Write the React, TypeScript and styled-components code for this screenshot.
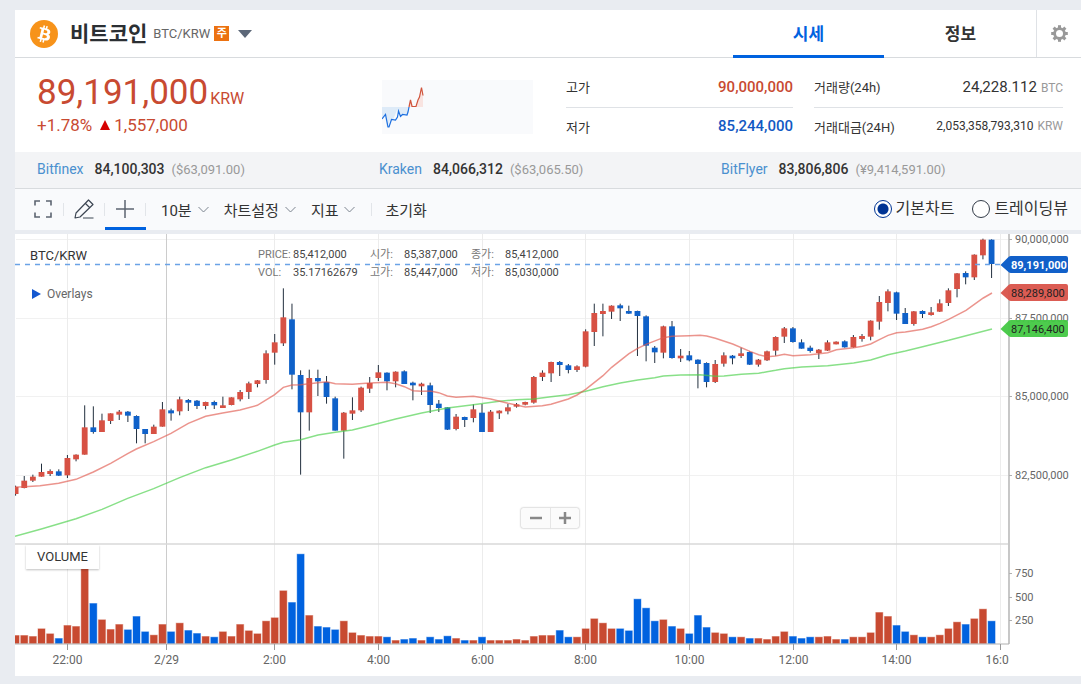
import React from "react";
import styled, { createGlobalStyle } from "styled-components";

const RED = "#c84a31";
const BLUE = "#0062df";
const SANS = `Roboto, "Noto Sans CJK KR", sans-serif`;

const GlobalStyle = createGlobalStyle`
  *, *::before, *::after { box-sizing: border-box; }
  body { margin: 0; background: #e9ecf1; font-family: ${SANS}; color: #333; }
  button { font: inherit; color: inherit; background: none; border: 0; padding: 0; cursor: pointer; }
  h1, p, dl, dd, dt { margin: 0; }
`;

const Page = styled.main`
  padding: 10px 0 8px 15px;
`;

/* ---------- header ---------- */
const Header = styled.header`
  display: flex;
  height: 48px;
  background: #fff;
  border-bottom: 1px solid #d8dbde;
`;
const CoinPicker = styled.div`
  flex: 1;
  display: flex;
  align-items: center;
  padding-left: 15px;
`;
const CoinName = styled.h1`
  font-size: 21px;
  line-height: 24px;
  font-weight: 700;
  color: #2b2f33;
  margin-left: 12px;
`;
const Pair = styled.span`
  font-size: 13px;
  color: #666;
  margin-left: 6px;
`;
const Badge = styled.span`
  width: 15px;
  height: 15px;
  margin-left: 4px;
  background: #ec7211;
  color: #fff;
  font-size: 11px;
  line-height: 15px;
  font-weight: 700;
  text-align: center;
`;
const PickerButton = styled.button`
  display: flex;
  margin-left: 9px;
`;
const Tabs = styled.nav`
  display: flex;
  gap: 1px;
`;
const Tab = styled.a<{ $active?: boolean }>`
  width: 151px;
  height: 48px;
  text-align: center;
  text-decoration: none;
  font-size: 17px;
  line-height: 48px;
  font-weight: 700;
  color: ${(p) => (p.$active ? BLUE : "#333")};
  border-bottom: 3px solid ${(p) => (p.$active ? BLUE : "transparent")};
`;
const SettingsButton = styled.button`
  width: 45px;
  display: flex;
  align-items: center;
  justify-content: center;
  border-left: 1px solid #dfe2e6;
`;

/* ---------- price summary ---------- */
const Summary = styled.section`
  display: flex;
  align-items: flex-start;
  height: 94px;
  padding: 14px 18px 0 22px;
  background: #fff;
`;
const PriceBlock = styled.div`
  flex: 1;
  color: ${RED};
`;
const Price = styled.p`
  font-size: 35px;
  line-height: 42px;
  font-weight: 400;
`;
const Unit = styled.span`
  font-size: 16px;
  line-height: 16px;
  margin-left: 2px;
`;
const Change = styled.p`
  display: flex;
  align-items: center;
  gap: 4px;
  font-size: 17px;
  line-height: 22px;
  font-weight: 400;
`;
const UpMark = styled.i`
  margin-left: 4px;
  border: 5px solid transparent;
  border-top: 0;
  border-bottom: 10px solid #d60000;
`;
const SparkBox = styled.svg`
  width: 151px;
  height: 54px;
  margin: 8px 33px 0 0;
  background: #f9fafc;
`;
const Stats = styled.dl<{ $width: number }>`
  width: ${(p) => p.$width}px;
  margin-top: -4px;
  & + & { margin-left: 21px; }
`;
const Stat = styled.div`
  display: flex;
  justify-content: space-between;
  align-items: center;
  height: 38px;
  padding-bottom: 2px;
  &:first-child {
    height: 40px;
    border-bottom: 1px solid #dfe2e6;
  }
`;
const StatName = styled.dt`
  font-size: 13px;
`;
const StatValue = styled.dd<{ $color?: string; $small?: boolean }>`
  font-size: ${(p) => (p.$small ? 12 : 15)}px;
  font-weight: ${(p) => (p.$color ? 500 : 400)};
  color: ${(p) => p.$color ?? "#333"};
`;
const StatUnit = styled.span`
  font-size: 12px;
  color: #999;
  margin-left: 4px;
`;

/* ---------- other exchanges ---------- */
const Exchanges = styled.section`
  display: grid;
  grid-template-columns: repeat(3, 1fr);
  align-items: center;
  height: 37px;
  padding: 0 18px 2px 22px;
  background: #f3f4f6;
  border-bottom: 1px solid #d8dbde;
`;
const Exchange = styled.div`
  display: flex;
  align-items: baseline;
  font-size: 14px;
`;
const ExchangeLink = styled.a`
  color: #4a90cf;
  text-decoration: none;
`;
const ExchangePrice = styled.span`
  font-weight: 500;
  margin: 0 7px 0 11px;
`;
const ExchangeRaw = styled.span`
  font-size: 13px;
  color: #999;
`;

/* ---------- toolbar ---------- */
const Toolbar = styled.div`
  display: flex;
  align-items: center;
  height: 41px;
  padding-right: 12px;
  background: #f9fafc;
  font-size: 15px;
`;
const ToolButton = styled.button<{ $active?: boolean }>`
  display: flex;
  align-items: center;
  justify-content: center;
  width: 41px;
  height: 41px;
  border-bottom: 3px solid ${(p) => (p.$active ? BLUE : "transparent")};
  padding: 2px 2px 0 0;
  &:first-child { width: 49px; padding: 2px 0 0 7px; }
`;
const Divider = styled.span`
  width: 1px;
  height: 13px;
  margin-left: -1px;
  background: #e2e5e9;
`;
const MenuButton = styled.button`
  display: flex;
  align-items: center;
  gap: 6px;
  margin-left: 15px;
`;
const ResetButton = styled.button`
  margin-left: 13px;
`;
const MenuDivider = styled(Divider)`
  margin-left: 16px;
`;
const ChartTypes = styled.fieldset`
  display: flex;
  gap: 18px;
  margin: 0 0 0 auto;
  padding: 0 1px 1px 0;
  border: 0;
`;
const ChartType = styled.label`
  display: flex;
  align-items: center;
  gap: 4px;
  font-size: 16px;
  line-height: 20px;
`;
const Radio = styled.input`
  appearance: none;
  width: 18px;
  height: 18px;
  margin: 0;
  border: 1px solid #333b48;
  border-radius: 50%;
  background: #fff;
  &:checked {
    border-color: #003494;
    background: radial-gradient(circle, #003494 5px, #fff 6px);
  }
`;

/* ---------- chart ---------- */
const ChartPanel = styled.section`
  position: relative;
  margin-top: 4px;
  background: #fff;
`;
const ChartSvg = styled.svg`
  display: block;
  width: 100%;
  font-family: ${SANS};
`;
const ChartPair = styled.strong`
  position: absolute;
  left: 15px;
  top: 14px;
  font-size: 13px;
  line-height: 16px;
  font-weight: 400;
`;
const Overlays = styled.button`
  position: absolute;
  left: 17px;
  top: 52px;
  display: flex;
  align-items: center;
  gap: 6px;
  font-size: 12px;
  line-height: 16px;
  color: #666;
`;
const Readout = styled.dl`
  position: absolute;
  left: 243px;
  top: 12px;
  display: grid;
  grid-template-columns: 35px 77px 34px 67px 34px auto;
  font-size: 11px;
  line-height: 18px;
  color: #444;
  dt { color: #777; }
`;
const VolumeTag = styled.div`
  position: absolute;
  left: 11px;
  top: 311px;
  padding: 4px 11px 4px;
  font-size: 13px;
  line-height: 16px;
  background: #fff;
  box-shadow: 0 1px 2px rgba(0, 0, 0, 0.25);
`;
const ZoomGroup = styled.div`
  position: absolute;
  left: 47.5%;
  top: 274px;
  display: flex;
  background: #fbfbfb;
  border-radius: 2px;
  box-shadow: 0 0 2px rgba(0, 0, 0, 0.4);
`;
const ZoomButton = styled.button`
  display: flex;
  align-items: center;
  justify-content: center;
  width: 29px;
  height: 20px;
  & + & { border-left: 1px solid #e6e6e6; }
`;

/* Candles: wick top, body top, body bottom, wick bottom (thirds of a unit), rising or falling. */
type Candle = [number, number, number, number, "R" | "B"];
const CANDLES: Candle[] = [
  [767, 771, 792, 797, "R"], [738, 752, 774, 775, "R"], [734, 740, 752, 756, "R"], [701, 726, 740, 740, "R"],
  [718, 723, 732, 738, "R"], [718, 724, 737, 738, "B"], [675, 684, 736, 744, "R"], [673, 674, 688, 694, "R"],
  [526, 592, 674, 674, "R"], [529, 592, 606, 611, "B"], [551, 571, 606, 606, "R"], [550, 550, 573, 582, "R"],
  [540, 545, 554, 570, "R"], [543, 545, 557, 576, "B"], [556, 558, 597, 640, "B"], [597, 597, 612, 640, "B"],
  [584, 590, 612, 612, "R"], [516, 538, 590, 590, "R"], [536, 541, 550, 572, "B"], [500, 508, 544, 556, "R"],
  [507, 510, 518, 543, "B"], [510, 512, 528, 537, "B"], [515, 516, 528, 538, "R"], [512, 516, 526, 537, "B"],
  [500, 526, 534, 534, "R"], [502, 502, 525, 526, "R"], [480, 486, 508, 514, "R"], [455, 460, 486, 507, "R"],
  [450, 451, 462, 472, "R"], [361, 370, 450, 461, "R"], [312, 337, 368, 404, "R"], [175, 262, 340, 348, "R"],
  [221, 268, 434, 478, "B"], [421, 435, 547, 734, "B"], [419, 444, 547, 602, "R"], [419, 444, 454, 498, "B"],
  [438, 456, 501, 521, "B"], [500, 505, 602, 602, "B"], [546, 548, 602, 686, "R"], [502, 541, 551, 570, "R"],
  [470, 473, 541, 546, "R"], [441, 459, 476, 489, "R"], [405, 427, 444, 453, "R"], [427, 428, 454, 481, "B"],
  [424, 425, 454, 472, "R"], [421, 424, 462, 462, "B"], [455, 458, 466, 511, "B"], [458, 461, 469, 495, "R"],
  [458, 466, 525, 549, "B"], [510, 521, 534, 546, "B"], [532, 532, 599, 600, "B"], [552, 560, 597, 601, "R"],
  [560, 561, 570, 591, "B"], [523, 538, 564, 577, "R"], [522, 548, 606, 606, "B"], [540, 545, 606, 606, "R"],
  [541, 542, 550, 567, "R"], [522, 532, 544, 553, "R"], [519, 523, 530, 533, "R"], [515, 516, 524, 526, "R"],
  [438, 441, 518, 521, "R"], [421, 428, 441, 453, "R"], [395, 396, 430, 456, "R"], [393, 396, 405, 438, "B"],
  [402, 406, 420, 430, "B"], [406, 409, 420, 426, "R"], [298, 304, 410, 412, "R"], [221, 249, 306, 348, "R"],
  [221, 243, 252, 319, "R"], [226, 227, 245, 267, "R"], [221, 226, 235, 273, "B"], [227, 243, 251, 252, "B"],
  [242, 243, 258, 378, "B"], [256, 259, 347, 394, "B"], [348, 353, 367, 399, "B"], [287, 289, 368, 385, "R"],
  [273, 289, 384, 386, "B"], [357, 377, 385, 396, "R"], [363, 376, 391, 394, "B"], [388, 389, 402, 475, "B"],
  [397, 399, 456, 472, "B"], [390, 402, 456, 459, "R"], [367, 376, 401, 410, "R"], [375, 377, 385, 403, "B"],
  [353, 370, 378, 384, "R"], [364, 366, 404, 405, "B"], [387, 389, 404, 410, "R"], [362, 364, 391, 393, "R"],
  [319, 321, 362, 377, "R"], [291, 295, 320, 339, "R"], [291, 295, 336, 338, "B"], [328, 337, 356, 356, "B"],
  [347, 353, 363, 368, "B"], [357, 359, 369, 387, "R"], [331, 337, 362, 363, "R"], [334, 335, 343, 343, "R"],
  [331, 334, 352, 353, "B"], [315, 321, 352, 353, "R"], [312, 318, 327, 335, "R"], [271, 272, 320, 331, "R"],
  [198, 216, 275, 299, "R"], [178, 184, 219, 244, "R"], [185, 187, 251, 270, "B"], [234, 249, 282, 282, "B"],
  [243, 244, 282, 287, "R"], [241, 243, 252, 264, "B"], [231, 247, 255, 257, "R"], [208, 220, 245, 246, "R"],
  [175, 181, 219, 228, "R"], [129, 130, 177, 202, "R"], [124, 129, 142, 163, "B"], [73, 74, 142, 150, "R"],
  [26, 29, 76, 88, "R"], [28, 29, 102, 144, "B"],
];

/* Bar heights in thirds of a unit, one for each candle. */
const VOLUMES = [
  24, 24, 21, 44, 29, 15, 54, 51, 226, 120, 71, 42, 57, 41, 81, 35, 25, 57, 35, 61, 39, 30, 21, 19, 35, 21, 57, 38, 29,
  67, 77, 158, 123, 268, 84, 51, 48, 41, 67, 32, 24, 21, 21, 19, 9, 12, 15, 9, 19, 12, 22, 15, 9, 9, 19, 9, 9, 9, 12,
  9, 21, 24, 24, 39, 19, 19, 44, 74, 61, 44, 44, 38, 133, 106, 67, 71, 51, 44, 29, 84, 48, 32, 29, 19, 19, 15, 15, 12,
  21, 35, 21, 15, 19, 19, 21, 12, 12, 19, 19, 32, 93, 81, 54, 35, 25, 19, 19, 25, 44, 64, 57, 74, 103, 67,
];

const SHORT_AVERAGE = [
  [45, 771], [73, 770], [120, 767], [176, 760], [228, 748], [280, 726], [332, 700], [383, 671], [409, 657], [461, 635],
  [513, 610], [565, 580], [617, 559], [668, 549], [720, 540], [772, 526], [824, 494], [850, 472], [876, 465], [902, 464],
  [928, 461], [980, 455], [1006, 461], [1057, 463], [1109, 459], [1161, 457], [1187, 461], [1213, 470], [1239, 482],
  [1265, 484], [1291, 483], [1316, 488], [1342, 498], [1368, 502], [1394, 500], [1420, 499], [1472, 507], [1524, 520],
  [1576, 531], [1627, 527], [1653, 523], [1705, 507], [1731, 495], [1757, 478], [1809, 437], [1835, 412], [1887, 371],
  [1913, 355], [1938, 343], [1990, 323], [2016, 319], [2068, 317], [2100, 316], [2120, 318], [2146, 325], [2198, 342],
  [2250, 364], [2276, 374], [2301, 380], [2327, 378], [2353, 373], [2379, 377], [2431, 374], [2483, 368], [2509, 359],
  [2561, 353], [2587, 349], [2612, 342], [2638, 329], [2664, 316], [2690, 308], [2716, 306], [2768, 298], [2794, 290],
  [2820, 280], [2846, 268], [2898, 241], [2950, 204], [2976, 189],
];
const LONG_AVERAGE = [
  [45, 919], [124, 897], [228, 866], [306, 838], [383, 805], [461, 776], [539, 743], [617, 713], [694, 690], [772, 664],
  [824, 645], [850, 637], [902, 629], [954, 615], [1006, 607], [1057, 600], [1109, 587], [1187, 567], [1265, 549],
  [1342, 534], [1420, 524], [1498, 514], [1550, 509], [1601, 507], [1653, 500], [1705, 494], [1757, 484], [1809, 470],
  [1861, 459], [1913, 450], [1964, 443], [1990, 438], [2042, 435], [2100, 434], [2146, 439], [2172, 438], [2224, 433],
  [2276, 430], [2301, 425], [2327, 421], [2353, 416], [2405, 411], [2483, 407], [2561, 399], [2612, 390], [2664, 374],
  [2716, 363], [2768, 350], [2846, 331], [2898, 317], [2950, 304], [2976, 297],
];

const candleX = (i: number) => 0.6 + i * 8.637;
const priceY = (v: number) => (v - 12) / 3;
const linePoints = (pts: number[][]) => pts.map(([x, y]) => `${(x - 45) / 3},${priceY(y)}`).join(" ");

const TIMES: [number, string][] = [
  [52, "22:00"], [151, "2/29"], [259, "2:00"], [363, "4:00"], [467, "6:00"], [570, "8:00"], [674, "10:00"],
  [778, "12:00"], [881, "14:00"], [985, "16:00"],
];
const PRICES: [number, string][] = [[5, "90,000,000"], [84, "87,500,000"], [162, "85,000,000"], [241, "82,500,000"]];
const VOLUME_TICKS: [number, string][] = [[339, "750"], [363, "500"], [386, "250"]];
const FLAGS: [number, string, string, string][] = [
  [31, "89,191,000", "#1160c9", "#fff"],
  [59, "88,289,800", "#d9534a", "#222"],
  [95, "87,146,400", "#43c843", "#222"],
];

const Chart = () => (
  <ChartSvg viewBox="0 0 1066 442" role="img" aria-label="BTC/KRW">
    <defs>
      <clipPath id="plot"><rect x="0" y="0" width="994" height="442" /></clipPath>
    </defs>
    <g stroke="#f1f1f1" strokeWidth="1">
      {PRICES.map(([y]) => <line key={y} x1="1" x2="993" y1={y + 0.5} y2={y + 0.5} />)}
      {TIMES.map(([x, t]) => (
        <line key={x} x1={x + 0.5} x2={x + 0.5} y1="0" y2="409" stroke={t === "2/29" ? "#ccc" : "#ececec"} />
      ))}
    </g>
    <g clipPath="url(#plot)">
      {CANDLES.map(([wt, bt, bb, wb, c], i) => (
        <g key={i}>
          <line x1={candleX(i)} x2={candleX(i)} y1={priceY(wt)} y2={priceY(wb)} stroke="#222f3e" />
          <rect x={candleX(i) - 2.9} y={priceY(bt)} width="5.8" height={(bb - bt) / 3} fill={c === "R" ? "#d75144" : "#0f61c9"} />
        </g>
      ))}
      <polyline points={linePoints(LONG_AVERAGE)} fill="none" stroke="#48cf48" strokeOpacity=".65" strokeWidth="1.5" />
      <polyline points={linePoints(SHORT_AVERAGE)} fill="none" stroke="#e05a50" strokeOpacity=".65" strokeWidth="1.5" />
      {VOLUMES.map((v, i) => {
        const color = CANDLES[i][4] === "R" ? RED : BLUE;
        return (
          <rect key={i} x={candleX(i) - 3.5} y={409.500 - v / 3} width="7" height={v / 3} fill={color} stroke={color} strokeOpacity=".4" />
        );
      })}
    </g>
    <line x1="0" x2="985" y1="30.5" y2="30.5" stroke="#6ba3e6" strokeWidth="1.3" strokeDasharray="5 5" />
    <line x1="0" x2="993" y1="310" y2="310" stroke="#d9d9d9" strokeWidth="1.4" />
    <g stroke="#b0b0b0">
      <line x1="0" x2="994" y1="410" y2="410" />
      <line x1="994" x2="994" y1="0" y2="410" strokeWidth="1.4" />
      {TIMES.map(([x]) => <line key={x} x1={x + 0.5} x2={x + 0.5} y1="410" y2="416" stroke="#999" />)}
      {PRICES.concat(VOLUME_TICKS).map(([y]) => <line key={y} x1="994" x2="997" y1={y + 0.5} y2={y + 0.5} />)}
    </g>
    <svg x="0" y="410" width="994" height="32">
      {TIMES.map(([x, t]) => (
        <text key={x} x={x + 0.5} y="20" fontSize="12" fill="#666" textAnchor="middle">{t}</text>
      ))}
    </svg>
    <g fontSize="11" fill="#666">
      {PRICES.concat(VOLUME_TICKS).map(([y, t]) => <text key={y} x="1000" y={y + 4}>{t}</text>)}
    </g>
    {FLAGS.map(([y, t, bg, fg]) => (
      <g key={t}>
        <path
          d={`M985.5 ${y}l8-8q1-1 2.500-1h55q2 0 2 2v13q0 2-2 2h-55q-1.500 0-2.500-1z`}
          fill={bg} fillOpacity={fg === "#fff" ? 1 : 0.95}
        />
        <text x="996" y={y + 4} fontSize="11" fill={fg} fontWeight={fg === "#fff" ? 700 : 400}>{t}</text>
      </g>
    ))}
  </ChartSvg>
);

const Sparkline = () => (
  <SparkBox viewBox="0 0 151 54" aria-hidden="true">
    <path d="M0 27H27L25 35H21L17 35 15 30 11 40H8L5 48 3 35 0 39z" fill="#deebf8" />
    <path d="M27 27L28.500 20 31 26 34 26 37 17 39 8 41 15V27z" fill="#f9e4e1" />
    <path d="M0 39L3.500 34.500 6 47H7L9.500 39.500 13.500 40 15.500 37 16.500 31 18.500 36.500 20.500 34.500 25 35 26 32 27 27" fill="none" stroke="#1c6fe0" strokeWidth="1.200" />
    <path d="M27 27L28.500 20 30 26.500H34L36 20 37.500 17 39.500 7.500 41 15.500" fill="none" stroke="#d0543c" strokeWidth="1.200" />
  </SparkBox>
);

const Caret = () => (
  <svg width="11" height="7" viewBox="0 0 11 7" fill="none" stroke="#7c848f"><path d="M.5 1 5.500 6 10.500 1" /></svg>
);

const BitcoinLogo = () => (
  <svg width="28" height="28" viewBox="0 0 32 32" aria-hidden="true">
    <circle cx="16" cy="16" r="16" fill="#f7931a" />
    <path
      fill="#fff"
      d="M23.189 14.020c.314-2.096-1.283-3.223-3.465-3.975l.708-2.840-1.728-.43-.69 2.765c-.454-.114-.92-.22-1.385-.326l.695-2.783L15.596 6l-.708 2.839c-.376-.086-.746-.17-1.104-.26l.002-.009-2.384-.595-.46 1.846s1.283.294 1.256.312c.7.175.826.638.805 1.006l-.806 3.235c.048.012.11.03.18.057l-.183-.045-1.130 4.532c-.086.212-.303.531-.793.410.018.025-1.256-.313-1.256-.313l-.858 1.978 2.250.561c.418.105.828.215 1.231.318l-.715 2.872 1.727.43.708-2.840c.472.127.930.245 1.378.357l-.706 2.828 1.728.43.715-2.866c2.948.558 5.164.333 6.097-2.333.752-2.146-.037-3.385-1.588-4.192 1.130-.26 1.980-1.003 2.207-2.538zm-3.950 5.538c-.533 2.147-4.148.986-5.320.695l.950-3.805c1.172.293 4.929.872 4.370 3.110zm.535-5.569c-.487 1.953-3.495.960-4.470.717l.860-3.450c.975.243 4.118.696 3.610 2.733z"
    />
  </svg>
);

const GearIcon = () => (
  <svg width="17" height="17" viewBox="0 0 17 17" fill="none" stroke="#999" aria-hidden="true">
    <circle cx="8.500" cy="8.500" r="4.900" strokeWidth="2.800" />
    <g strokeWidth="3">
      {[0, 45, 90, 135, 180, 225, 270, 315].map((a) => (
        <path key={a} d="M8.500 3V.2" transform={`rotate(${a} 8.500 8.500)`} />
      ))}
    </g>
  </svg>
);

const EXCHANGES = [
  ["Bitfinex", "84,100,303", "($63,091.00)"],
  ["Kraken", "84,066,312", "($63,065.50)"],
  ["BitFlyer", "83,806,806", "(¥9,414,591.00)"],
];
const MENUS = ["10분", "차트설정", "지표"];

export default function App() {
  return (
    <Page>
      <GlobalStyle />
      <Header>
        <CoinPicker>
          <BitcoinLogo />
          <CoinName>비트코인</CoinName>
          <Pair>BTC/KRW</Pair>
          <Badge>주</Badge>
          <PickerButton aria-label="코인 선택">
            <svg width="14" height="8" viewBox="0 0 14 8"><path d="M0 0h14L7 8z" fill="#5c6778" /></svg>
          </PickerButton>
        </CoinPicker>
        <Tabs>
          <Tab href="#price" $active>시세</Tab>
          <Tab href="#info">정보</Tab>
        </Tabs>
        <SettingsButton aria-label="설정"><GearIcon /></SettingsButton>
      </Header>

      <Summary>
        <PriceBlock>
          <Price>89,191,000<Unit>KRW</Unit></Price>
          <Change>+1.78%<UpMark />1,557,000</Change>
        </PriceBlock>
        <Sparkline />
        <Stats $width={227}>
          <Stat><StatName>고가</StatName><StatValue $color={RED}>90,000,000</StatValue></Stat>
          <Stat><StatName>저가</StatName><StatValue $color="#1259c3">85,244,000</StatValue></Stat>
        </Stats>
        <Stats $width={249}>
          <Stat><StatName>거래량(24h)</StatName><StatValue>24,228.112<StatUnit>BTC</StatUnit></StatValue></Stat>
          <Stat><StatName>거래대금(24H)</StatName><StatValue $small>2,053,358,793,310<StatUnit>KRW</StatUnit></StatValue></Stat>
        </Stats>
      </Summary>

      <Exchanges>
        {EXCHANGES.map(([name, price, raw]) => (
          <Exchange key={name}>
            <ExchangeLink href={`#${name}`}>{name}</ExchangeLink>
            <ExchangePrice>{price}</ExchangePrice>
            <ExchangeRaw>{raw}</ExchangeRaw>
          </Exchange>
        ))}
      </Exchanges>

      <Toolbar>
        <ToolButton aria-label="전체화면">
          <svg width="18" height="18" viewBox="0 0 18 18" fill="none" stroke="#5c6470" strokeWidth="1.600">
            <path d="M1 5.500V1H6M12 1H17V5.500M17 12.500V17H12M6 17H1V12.500" />
          </svg>
        </ToolButton>
        <Divider />
        <ToolButton aria-label="그리기">
          <svg width="20" height="20" viewBox="0 0 20 20" fill="none" stroke="#3d4653" strokeWidth="1.200" strokeLinejoin="round">
            <path d="M1 19 2 14 14.500 1 19 5.500 6 18zM11.500 4.500 15.500 8.500M9 19H19.500" />
          </svg>
        </ToolButton>
        <Divider />
        <ToolButton aria-label="십자선" $active>
          <svg width="18" height="18" viewBox="0 0 18 18" stroke="#5c6470" strokeWidth="1.500"><path d="M9 0V18M0 9H18" /></svg>
        </ToolButton>
        <Divider />
        {MENUS.map((m) => <MenuButton key={m}>{m}<Caret /></MenuButton>)}
        <MenuDivider />
        <ResetButton>초기화</ResetButton>
        <ChartTypes>
          <ChartType><Radio type="radio" name="chart" defaultChecked />기본차트</ChartType>
          <ChartType><Radio type="radio" name="chart" />트레이딩뷰</ChartType>
        </ChartTypes>
      </Toolbar>

      <ChartPanel>
        <Chart />
        <ChartPair>BTC/KRW</ChartPair>
        <Overlays>
          <svg width="9" height="10" viewBox="0 0 9 10"><path d="M0 0 9 5 0 10z" fill="#1558d0" /></svg>
          Overlays
        </Overlays>
        <Readout>
          <dt>PRICE:</dt><dd>85,412,000</dd><dt>시가:</dt><dd>85,387,000</dd><dt>종가:</dt><dd>85,412,000</dd>
          <dt>VOL:</dt><dd>35.17162679</dd><dt>고가:</dt><dd>85,447,000</dd><dt>저가:</dt><dd>85,030,000</dd>
        </Readout>
        <ZoomGroup>
          <ZoomButton aria-label="축소">
            <svg width="12" height="12" viewBox="0 0 12 12" stroke="#888" strokeWidth="2.500"><path d="M0 6H12" /></svg>
          </ZoomButton>
          <ZoomButton aria-label="확대">
            <svg width="12" height="12" viewBox="0 0 12 12" stroke="#888" strokeWidth="2.500"><path d="M0 6H12M6 0V12" /></svg>
          </ZoomButton>
        </ZoomGroup>
        <VolumeTag>VOLUME</VolumeTag>
      </ChartPanel>
    </Page>
  );
}
